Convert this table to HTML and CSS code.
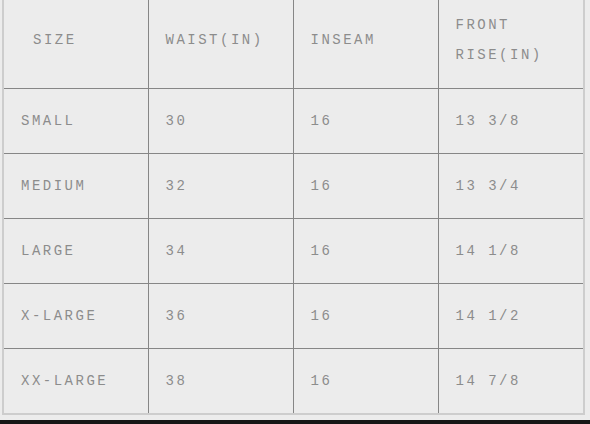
FILE: index.html
```html
<!DOCTYPE html>
<html>
<head>
<meta charset="utf-8">
<link rel="stylesheet" href="styles.css">
</head>
<body>
<div class="page">
  <table class="size-table">
    <colgroup>
      <col class="c1"><col class="c2"><col class="c3"><col class="c4">
    </colgroup>
    <thead>
      <tr>
        <th class="first">SIZE</th>
        <th>WAIST(IN)</th>
        <th>INSEAM</th>
        <th>FRONT<br>RISE(IN)</th>
      </tr>
    </thead>
    <tbody>
      <tr><td>SMALL</td><td>30</td><td>16</td><td>13 3/8</td></tr>
      <tr><td>MEDIUM</td><td>32</td><td>16</td><td>13 3/4</td></tr>
      <tr><td>LARGE</td><td>34</td><td>16</td><td>14 1/8</td></tr>
      <tr><td>X-LARGE</td><td>36</td><td>16</td><td>14 1/2</td></tr>
      <tr><td>XX-LARGE</td><td>38</td><td>16</td><td>14 7/8</td></tr>
    </tbody>
  </table>
  <div class="footer-bar"></div>
</div>
</body>
</html>
```

FILE: styles.css
```css
html, body {
  margin: 0;
  padding: 0;
  background: #ececec;
}

.page {
  width: 590px;
  height: 424px;
  overflow: hidden;
  display: flex;
  flex-direction: column;
  padding-left: 2px;
  box-sizing: border-box;
}

.size-table {
  width: 581px;
  table-layout: fixed;
  border-collapse: collapse;
  border: 2px solid #cdcdcd;
  border-top: none;
  font-family: "Liberation Mono", "DejaVu Sans Mono", monospace;
  font-size: 14px;
  letter-spacing: 2.5px;
  color: #8c8c8c;
}

.c1 { width: 145px; }
.c2 { width: 145px; }
.c3 { width: 145px; }
.c4 { width: 146px; }

.size-table th,
.size-table td {
  border: 1px solid #868686;
  text-align: left;
  font-weight: normal;
  padding: 0 0 0 17px;
  vertical-align: middle;
  white-space: nowrap;
}

.size-table thead th {
  border-top: none;
  height: 80px;
  padding-bottom: 8px;
  line-height: 30px;
}

.size-table th.first {
  padding-left: 29px;
}

.size-table tbody td {
  height: 64px;
  line-height: 20px;
}

.footer-bar {
  margin-top: 5px;
  flex: 1;
  background: #161616;
  margin-left: -2px;
}
```
